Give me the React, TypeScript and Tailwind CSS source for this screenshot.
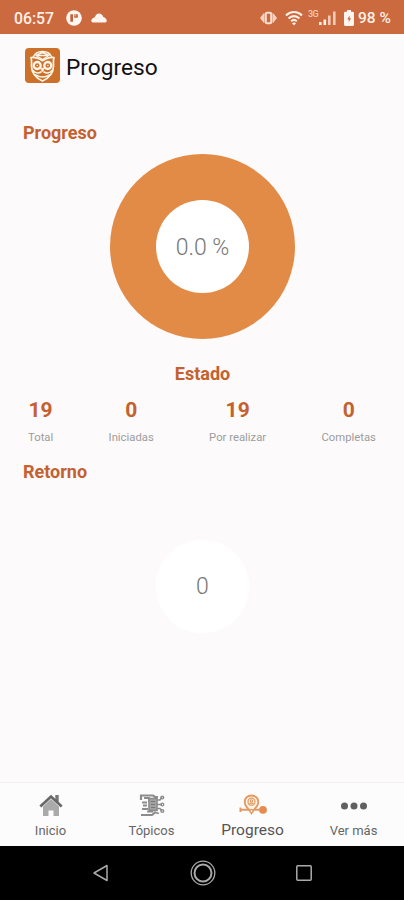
import React from 'react';
import type { ReactNode } from 'react';

const StatusBar = () => (
  <div className="flex h-[34px] shrink-0 items-center bg-[#cb693f] pl-[14px] pr-[13px] pt-[2px] text-[#fff1e8]">
    <span className="w-[52px] pt-px text-[15.800px] font-medium leading-none">06:57</span>
    <svg className="h-4 w-4" viewBox="0 0 16 16">
      <circle cx="8" cy="8" r="7.800" fill="#fff6ef" />
      <path d="M4.300 4.200H7v7.600H4.300zM8.200 4.200h3.600v3.600H8.200z" fill="#c4643c" />
      <path d="M8.200 4.200h2v2h-2z" fill="#e5a488" />
    </svg>
    <svg className="ml-[9px] mb-[2px] h-[11px] w-4" viewBox="0 0 16 11">
      <path d="M2 10.500C.8 10.500.2 9.600.3 8.600.6 7 2 5.800 3.800 5.300 4.600 3 5.900 1.400 8 1.400c2.200 0 3.500 1.500 4.300 3.500 2 .5 3.300 1.900 3.400 3.900.1 1-.5 1.700-1.500 1.700z" fill="#fff6ef" />
    </svg>
    <div className="ml-auto flex items-center">
      <svg className="mr-px h-[14px] w-[17px]" viewBox="0 0 17 14">
        <path d="M4 2.500v9L.5 7zM13 2.500v9L16.500 7z" fill="#f6d2c0" stroke="#f6d2c0" strokeLinejoin="round" />
        <rect x="5.800" y="1.700" width="5.400" height="10.600" rx="1.200" fill="none" stroke="#fbe0d2" strokeWidth="2" />
      </svg>
      <svg className="ml-[7px] h-4 w-[18px]" viewBox="0 0 18 16" fill="none" stroke="#fff1e8" strokeWidth="2.100">
        <path d="M1 5.400C5.500.8 12.500.8 17 5.400M3.600 8.400c3.100-3 7.700-3 10.800 0M6.200 11.200c1.700-1.500 3.900-1.500 5.600 0" />
        <path d="M7 13.200 9 15.500l2-2.300c-1.200-1-2.800-1-4 0z" fill="#fff1e8" stroke="none" />
      </svg>
      <span className="-mt-[3px] ml-[5px] h-[18px] w-[11px] text-[9px] font-medium leading-[12px] tracking-[-0.5px] text-[#f3c8b4]">3G</span>
      <svg className="h-4 w-[17px]" viewBox="0 0 17 16">
        <path d="M0 12h2.600v3H0zM4.500 9.500h2.600V15H4.500z" fill="#fff1e8" />
        <path d="M9 5.500h2.600V15H9zM14 1.500h2.600V15H14z" fill="#f3ccb8" />
      </svg>
      <svg className="ml-[8px] h-4 w-[10px]" viewBox="0 0 10 16">
        <path d="M3 0h4v1.700h1.500c.8 0 1.500.6 1.500 1.400v11.400c0 .8-.7 1.500-1.500 1.500h-7C.7 16 0 15.300 0 14.500V3.100c0-.8.7-1.400 1.500-1.400H3z" fill="#fff6ef" />
        <path d="M5.700 5.500 3.200 9.300h1.500v2.900l2.300-4H5.500z" fill="#cb693f" />
      </svg>
      <span className="ml-[4px] w-[33px] whitespace-nowrap pt-[2px] text-[15.500px] font-medium leading-none">98 %</span>
    </div>
  </div>
);

const OwlLogo = () => (
  <svg className="h-[35px] w-[35px]" viewBox="0 0 35 35" fill="none" stroke="#fff5e8" strokeLinecap="round" strokeLinejoin="round">
    <rect width="35" height="35" rx="4" fill="#cc702a" stroke="none" />
    <path d="M6 9.500c4-.8 7 .5 11.500 3.200C22 10 25 8.700 29 9.500c-1 3-.5 5-.5 8.500 0 7-4 11.800-11 15-7-3.200-11-8-11-15 0-3.500.5-5.500-.5-8.500z" strokeWidth="1.700" />
    <path d="M8 9.500c1.500-4 5-6 9.500-6s8 2 9.500 6M11 7.500l6.500-3 6.500 3-6.500 4z" strokeWidth="1.400" />
    <path d="M13.500 7.500h8" strokeWidth="1.700" />
    <circle cx="12.200" cy="17.500" r="3.500" strokeWidth="2.300" />
    <circle cx="22.800" cy="17.500" r="3.500" strokeWidth="2.300" />
    <path d="M12.200 17.500h.1M22.800 17.500h.1" strokeWidth="1.500" />
    <path d="m15.700 20.500 1.800 3 1.800-3z" fill="#fff5e8" strokeWidth="1" />
    <path d="M8 22.500c2 2.500 5.500 3 8 1.500M27 22.500c-2 2.500-5.500 3-8 1.500M10.500 27c2.500 1.500 4.500 2 7 2s4.500-.5 7-2" strokeWidth="1.700" />
  </svg>
);

const HomeIcon = () => (
  <svg className="h-6 w-6" viewBox="0 0 24 24">
    <path d="M4 13.500 12 6l8 7.500V23h-5.500v-5.500h-5V23H4z" fill="#aaa" />
    <path d="M16.300 2h3.400v7h-3.400z" fill="#777" />
    <path d="m1.300 13.500 10.700-10 10.700 10" fill="none" stroke="#686868" strokeWidth="2.700" />
  </svg>
);

const TopicsIcon = () => (
  <svg className="h-6 w-[26px]" viewBox="0 0 26 24" fill="none" stroke="#8c8c8c">
    <path d="M2 7V2.500h12l2 1.500h3M3 9.500h5M4 12.500h4M3 16h6M2 22h11l3.500-3" strokeWidth="2.200" />
    <path d="M5 5h5v4M8 18.700h6" strokeWidth="1.800" />
    <rect x="10" y="5.500" width="8" height="12" fill="#a3a3a3" strokeWidth="1.600" />
    <path d="M12 8.500h4M12 11.500h4M12 14.500h4" stroke="#777" strokeWidth="1.200" />
    <path d="M18 7h3l2-3M18 11.500h5M18 15.500h3l2 2.500M16 19.500l4 1" strokeWidth="1.500" />
    <circle cx="23.300" cy="4.500" r="1.400" strokeWidth="1.400" />
    <circle cx="23.300" cy="11.500" r="1.400" strokeWidth="1.400" />
    <circle cx="23.300" cy="18" r="1.400" strokeWidth="1.400" />
  </svg>
);

const ProgressIcon = () => (
  <svg className="h-6 w-7" viewBox="0 0 28 24" fill="none" stroke="#e59a63">
    <path d="M1.500 16.800h9M15 16.800h7M1.500 14.500v4.600" strokeWidth="2" />
    <path d="M12.500 20c-1.800-3.800-6.800-6-6.800-11.100 0-3.700 2.900-6.400 6.800-6.400s6.800 2.700 6.800 6.400c0 5.100-5 7.300-6.800 11.100z" fill="#fff4ea" strokeWidth="1.900" />
    <circle cx="12.500" cy="8.700" r="3.500" strokeWidth="1.300" />
    <circle cx="12.500" cy="7.900" r="1.200" strokeWidth="1.100" />
    <path d="M10.500 11.200c.5-1.500 3.500-1.500 4 0" strokeWidth="1.100" />
    <circle cx="12.500" cy="18" r="1.600" fill="#fff4ea" strokeWidth="1.400" />
    <circle cx="24" cy="16.800" r="3.900" fill="#e88b4f" stroke="none" />
  </svg>
);

const MoreIcon = () => (
  <svg className="h-6 w-7" viewBox="0 0 28 24" fill="#606060">
    <circle cx="4.500" cy="13" r="3.500" />
    <circle cx="14" cy="13" r="3.500" />
    <circle cx="23.500" cy="13" r="3.500" />
  </svg>
);

const Stat = ({ value, label }: { value: number; label: string }) => (
  <div className="flex flex-col items-center">
    <span className="text-[21px] font-bold leading-6 text-[#c5602f]">{value}</span>
    <span className="mt-[9px] whitespace-nowrap text-[11.300px] leading-[14px] text-[#9c9c9c]">{label}</span>
  </div>
);

const NavItem = ({ icon, label, active }: { icon: ReactNode; label: string; active?: boolean }) => (
  <div className="flex w-[101px] flex-col items-center pt-[10px]">
    {icon}
    <span className={active ? 'mt-[3px] text-[15.500px] leading-5 text-[#555]' : 'mt-[4px] text-[13px] leading-5 text-[#666]'}>
      {label}
    </span>
  </div>
);

const App = () => {
  return (
    <div className="flex h-screen w-full flex-col overflow-hidden bg-[#fcfafb] font-['Roboto',sans-serif]">
      <StatusBar />

      <header className="flex h-[66px] shrink-0 items-center gap-[6px] pb-[3px] pl-[25px]">
        <OwlLogo />
        <h1 className="pt-[4px] text-[22.700px] leading-8 text-[#111]">Progreso</h1>
      </header>

      <main className="flex-1">
        <h2 className="pl-[23px] pt-[21px] text-[18px] font-bold leading-6 text-[#c5602f]">Progreso</h2>

        <div className="mx-auto mt-[9px] flex h-[185px] w-[185px] items-center justify-center rounded-full bg-[#e28b47]">
          <div className="flex h-[93px] w-[93px] items-center justify-center rounded-full bg-white pl-px pt-[3px] text-[23px] font-light text-[#777]">
            0.0 %
          </div>
        </div>

        <h2 className="mt-[23px] pl-px text-center text-[18px] font-bold leading-6 text-[#c5602f]">Estado</h2>
        <div className="mt-[12px] flex justify-between pl-[28px] pr-[28px]">
          <Stat value={19} label="Total" />
          <Stat value={0} label="Iniciadas" />
          <Stat value={19} label="Por realizar" />
          <Stat value={0} label="Completas" />
        </div>

        <h2 className="mt-[15px] pl-[23px] text-[18px] font-bold leading-6 text-[#c5602f]">Retorno</h2>
        <div className="mx-auto mt-[56px] flex h-[93px] w-[93px] items-center justify-center rounded-full bg-white pl-px pt-px text-[23px] font-light text-[#777] shadow-[0_0_3px_white]">
          0
        </div>
      </main>

      <nav className="flex h-[64px] shrink-0 border-t border-[#f0eeef] bg-[#fdfcfd]">
        <NavItem icon={<HomeIcon />} label="Inicio" />
        <NavItem icon={<TopicsIcon />} label="Tópicos" />
        <NavItem icon={<ProgressIcon />} label="Progreso" active />
        <NavItem icon={<MoreIcon />} label="Ver más" />
      </nav>

      <div className="flex h-[54px] shrink-0 items-center justify-between bg-black pl-[92px] pr-[91px]">
        <svg className="h-[18px] w-[18px]" viewBox="0 0 18 18" fill="none" stroke="#aaa" strokeWidth="1.500">
          <path d="M15 1.500v15L2 9z" strokeLinejoin="round" />
        </svg>
        <svg className="h-[26px] w-[26px]" viewBox="0 0 26 26" fill="none" stroke="#aaa">
          <circle cx="13" cy="13" r="11.800" strokeWidth="1.300" />
          <circle cx="13" cy="13" r="8.500" strokeWidth="2" />
        </svg>
        <svg className="h-[18px] w-[18px]" viewBox="0 0 18 18" fill="none" stroke="#aaa" strokeWidth="1.500">
          <rect x="1.800" y="1.800" width="14.400" height="14.400" rx="1" />
        </svg>
      </div>
    </div>
  );
};

export default App;
